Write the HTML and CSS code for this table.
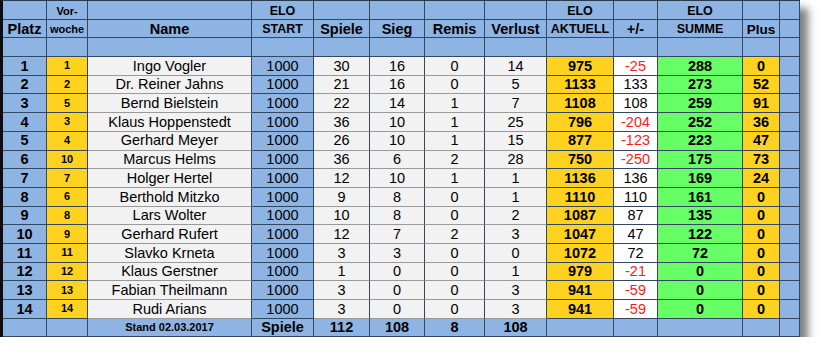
FILE: index.html
```html
<!DOCTYPE html>
<html lang="de">
<head>
<meta charset="utf-8">
<title>ELO Tabelle</title>
<link rel="stylesheet" href="styles.css">
</head>
<body>
<div class="sheet">
  <!-- header row 1 -->
  <div class="c b"></div>
  <div class="c b sm bd h1">Vor-</div>
  <div class="c b"></div>
  <div class="c b bd elo h1">ELO</div>
  <div class="c b"></div>
  <div class="c b"></div>
  <div class="c b"></div>
  <div class="c b"></div>
  <div class="c b bd elo h1">ELO</div>
  <div class="c b"></div>
  <div class="c b bd elo h1">ELO</div>
  <div class="c b"></div>
  <div class="c b"></div>
  <!-- header row 2 -->
  <div class="c b bd h2">Platz</div>
  <div class="c b sm bd h2">woche</div>
  <div class="c b bd h2">Name</div>
  <div class="c b bd cap h2">START</div>
  <div class="c b bd h2">Spiele</div>
  <div class="c b bd h2">Sieg</div>
  <div class="c b bd h2">Remis</div>
  <div class="c b bd h2">Verlust</div>
  <div class="c b bd cap h2">AKTUELL</div>
  <div class="c b bd h2">+/-</div>
  <div class="c b bd cap h2">SUMME</div>
  <div class="c b bd plus h2">Plus</div>
  <div class="c b"></div>
  <!-- header row 3 -->
  <div class="c b"></div><div class="c b"></div><div class="c b"></div><div class="c b"></div><div class="c b"></div><div class="c b"></div><div class="c b"></div><div class="c b"></div><div class="c b"></div><div class="c b"></div><div class="c b"></div><div class="c b"></div><div class="c b"></div>

  <!-- 1 -->
  <div class="c b bd">1</div><div class="c y sm bd">1</div><div class="c g">Ingo Vogler</div><div class="c b">1000</div><div class="c g">30</div><div class="c g">16</div><div class="c g">0</div><div class="c g">14</div><div class="c y bd">975</div><div class="c w neg">-25</div><div class="c gr bd">288</div><div class="c y bd">0</div><div class="c b"></div>
  <!-- 2 -->
  <div class="c b bd">2</div><div class="c y sm bd">2</div><div class="c g">Dr. Reiner Jahns</div><div class="c b">1000</div><div class="c g">21</div><div class="c g">16</div><div class="c g">0</div><div class="c g">5</div><div class="c y bd">1133</div><div class="c w">133</div><div class="c gr bd">273</div><div class="c y bd">52</div><div class="c b"></div>
  <!-- 3 -->
  <div class="c b bd">3</div><div class="c y sm bd">5</div><div class="c g">Bernd Bielstein</div><div class="c b">1000</div><div class="c g">22</div><div class="c g">14</div><div class="c g">1</div><div class="c g">7</div><div class="c y bd">1108</div><div class="c w">108</div><div class="c gr bd">259</div><div class="c y bd">91</div><div class="c b"></div>
  <!-- 4 -->
  <div class="c b bd">4</div><div class="c y sm bd">3</div><div class="c g">Klaus Hoppenstedt</div><div class="c b">1000</div><div class="c g">36</div><div class="c g">10</div><div class="c g">1</div><div class="c g">25</div><div class="c y bd">796</div><div class="c w neg">-204</div><div class="c gr bd">252</div><div class="c y bd">36</div><div class="c b"></div>
  <!-- 5 -->
  <div class="c b bd">5</div><div class="c y sm bd">4</div><div class="c g">Gerhard Meyer</div><div class="c b">1000</div><div class="c g">26</div><div class="c g">10</div><div class="c g">1</div><div class="c g">15</div><div class="c y bd">877</div><div class="c w neg">-123</div><div class="c gr bd">223</div><div class="c y bd">47</div><div class="c b"></div>
  <!-- 6 -->
  <div class="c b bd">6</div><div class="c y sm bd">10</div><div class="c g">Marcus Helms</div><div class="c b">1000</div><div class="c g">36</div><div class="c g">6</div><div class="c g">2</div><div class="c g">28</div><div class="c y bd">750</div><div class="c w neg">-250</div><div class="c gr bd">175</div><div class="c y bd">73</div><div class="c b"></div>
  <!-- 7 -->
  <div class="c b bd">7</div><div class="c y sm bd">7</div><div class="c g">Holger Hertel</div><div class="c b">1000</div><div class="c g">12</div><div class="c g">10</div><div class="c g">1</div><div class="c g">1</div><div class="c y bd">1136</div><div class="c w">136</div><div class="c gr bd">169</div><div class="c y bd">24</div><div class="c b"></div>
  <!-- 8 -->
  <div class="c b bd">8</div><div class="c y sm bd">6</div><div class="c g">Berthold Mitzko</div><div class="c b">1000</div><div class="c g">9</div><div class="c g">8</div><div class="c g">0</div><div class="c g">1</div><div class="c y bd">1110</div><div class="c w">110</div><div class="c gr bd">161</div><div class="c y bd">0</div><div class="c b"></div>
  <!-- 9 -->
  <div class="c b bd">9</div><div class="c y sm bd">8</div><div class="c g">Lars Wolter</div><div class="c b">1000</div><div class="c g">10</div><div class="c g">8</div><div class="c g">0</div><div class="c g">2</div><div class="c y bd">1087</div><div class="c w">87</div><div class="c gr bd">135</div><div class="c y bd">0</div><div class="c b"></div>
  <!-- 10 -->
  <div class="c b bd">10</div><div class="c y sm bd">9</div><div class="c g">Gerhard Rufert</div><div class="c b">1000</div><div class="c g">12</div><div class="c g">7</div><div class="c g">2</div><div class="c g">3</div><div class="c y bd">1047</div><div class="c w">47</div><div class="c gr bd">122</div><div class="c y bd">0</div><div class="c b"></div>
  <!-- 11 -->
  <div class="c b bd">11</div><div class="c y sm bd">11</div><div class="c g">Slavko Krneta</div><div class="c b">1000</div><div class="c g">3</div><div class="c g">3</div><div class="c g">0</div><div class="c g">0</div><div class="c y bd">1072</div><div class="c w">72</div><div class="c gr bd">72</div><div class="c y bd">0</div><div class="c b"></div>
  <!-- 12 -->
  <div class="c b bd">12</div><div class="c y sm bd">12</div><div class="c g">Klaus Gerstner</div><div class="c b">1000</div><div class="c g">1</div><div class="c g">0</div><div class="c g">0</div><div class="c g">1</div><div class="c y bd">979</div><div class="c w neg">-21</div><div class="c gr bd">0</div><div class="c y bd">0</div><div class="c b"></div>
  <!-- 13 -->
  <div class="c b bd">13</div><div class="c y sm bd">13</div><div class="c g">Fabian Theilmann</div><div class="c b">1000</div><div class="c g">3</div><div class="c g">0</div><div class="c g">0</div><div class="c g">3</div><div class="c y bd">941</div><div class="c w neg">-59</div><div class="c gr bd">0</div><div class="c y bd">0</div><div class="c b"></div>
  <!-- 14 -->
  <div class="c b bd">14</div><div class="c y sm bd">14</div><div class="c g">Rudi Arians</div><div class="c b">1000</div><div class="c g">3</div><div class="c g">0</div><div class="c g">0</div><div class="c g">3</div><div class="c y bd">941</div><div class="c w neg">-59</div><div class="c gr bd">0</div><div class="c y bd">0</div><div class="c b"></div>

  <!-- footer -->
  <div class="c b"></div><div class="c b"></div><div class="c b sm bd">Stand 02.03.2017</div><div class="c b bd">Spiele</div><div class="c b bd">112</div><div class="c b bd">108</div><div class="c b bd">8</div><div class="c b bd">108</div><div class="c b"></div><div class="c b"></div><div class="c b"></div><div class="c b"></div><div class="c b"></div>
</div>
</body>
</html>
```

FILE: styles.css
```css
html, body {
  margin: 0;
  padding: 0;
  background: #ffffff;
}

body {
  font-family: "Liberation Sans", Arial, sans-serif;
}

.sheet {
  display: grid;
  grid-template-columns: 44px 41px 164px 62px 56px 55px 60px 62px 67px 44px 85px 37px 20px;
  grid-template-rows: 19px 18px 19px repeat(14, 18.714px) 18px;
  width: max-content;
  border-left: 3px solid #0d0d0d;
  border-top: 1px solid #2a3a4f;
  box-shadow: 8px 8px 8px rgba(0, 0, 0, 0.5);
}

.c {
  box-sizing: border-box;
  border-right: 1px solid #34475e;
  border-bottom: 1px solid #34475e;
  display: flex;
  align-items: center;
  justify-content: center;
  font-size: 14.5px;
  line-height: 1;
  color: #000;
  white-space: nowrap;
  overflow: hidden;
}

.b { background: #8db4e2; }
.y { background: #ffd21f; }
.g { background: #f2f2f2; border-bottom-color: #9a9a9a; }
.w { background: #ffffff; }
.gr { background: #66ff66; }

.bd { font-weight: bold; }
.sm { font-size: 11px; }
.elo { font-size: 12.5px; }
.cap { font-size: 12.5px; }
.plus { font-size: 13.5px; }
.neg { color: #ff1a1a; }

.h1 { align-items: flex-end; padding-bottom: 2px; }
.h2 { padding-top: 2px; }
```
